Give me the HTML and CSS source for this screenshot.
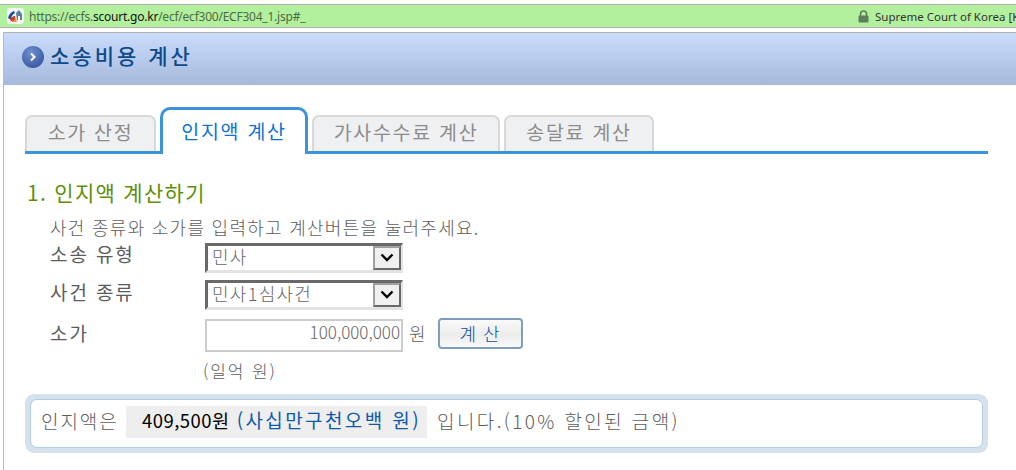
FILE: index.html
```html
<!DOCTYPE html>
<html lang="ko">
<head>
<meta charset="utf-8">
<title>소송비용 계산</title>
<link rel="stylesheet" href="styles.css">
</head>
<body>
<div class="urlbar">
  <svg class="favicon" width="17" height="16" viewBox="0 0 17 16"><rect x="0" y="0" width="17" height="16" rx="3" fill="#f4f4f4"/><path d="M1 10 C2 6 4 4 7 3 L8 5 C6 6 4 8 4 12Z" fill="#1b4f9c"/><path d="M3 12 C4 9 6 8 8 8 L9 14 L6 14Z" fill="#d9332a"/><path d="M5 14 L9 10 L10 14Z" fill="#e89a2c"/><path d="M9 5 L12 2 L15 6 L15 12 L10 12Z" fill="#5b7f9c"/><rect x="11" y="8" width="2" height="4" fill="#fff"/></svg>
  <span class="url"><span class="dim">https://ecfs.</span><span class="host">scourt.go.kr</span><span class="dim">/ecf/ecf300/ECF304_1.jsp#_</span></span>
  <span class="cert">
    <svg width="11" height="13" viewBox="0 0 11 13"><path d="M2.5 6V4a3 3 0 0 1 6 0v2" fill="none" stroke="#5f7f58" stroke-width="1.6"/><rect x="0.5" y="5.5" width="10" height="7" rx="1" fill="#5f7f58"/></svg>
    <span>Supreme Court of Korea [KR]</span>
  </span>
</div>
<div class="page">
  <h1 class="title"><span class="bullet"><svg width="8" height="10" viewBox="0 0 8 10"><path d="M2 1.5 L5.5 5 L2 8.5" fill="none" stroke="#fff" stroke-width="2"/></svg></span><span class="title-text">소송비용 계산</span></h1>
  <div class="content">
    <nav class="tabs">
      <a class="tab tab-1">소가 산정</a>
      <a class="tab tab-active">인지액 계산</a>
      <a class="tab tab-3">가사수수료 계산</a>
      <a class="tab tab-4">송달료 계산</a>
    </nav>
    <h2 class="section">1. 인지액 계산하기</h2>
    <p class="intro">사건 종류와 소가를 입력하고 계산버튼을 눌러주세요.</p>
    <div class="row row-1">
      <label class="label">소송 유형</label>
      <div class="select"><span class="value">민사</span><span class="arrow"><svg width="16" height="10" viewBox="0 0 16 10"><path d="M2.5 1.5 L8 7 L13.5 1.5" fill="none" stroke="#000" stroke-width="2.4"/></svg></span></div>
    </div>
    <div class="row row-2">
      <label class="label">사건 종류</label>
      <div class="select"><span class="value">민사1심사건</span><span class="arrow"><svg width="16" height="10" viewBox="0 0 16 10"><path d="M2.5 1.5 L8 7 L13.5 1.5" fill="none" stroke="#000" stroke-width="2.4"/></svg></span></div>
    </div>
    <div class="row row-3">
      <label class="label">소가</label>
      <div class="input">100,000,000</div>
      <span class="unit">원</span>
      <button class="calc" type="button">계 산</button>
    </div>
    <p class="amount">(일억 원)</p>
    <div class="result">
      <div class="result-inner">
        <span class="lead">인지액은</span>
        <span class="hl"><b class="sum">409,500원</b> <span class="words">(사십만구천오백 원)</span></span>
        <span class="tail">입니다.(10% 할인된 금액)</span>
      </div>
    </div>
  </div>
</div>
</body>
</html>
```
FILE: styles.css
```css
* { box-sizing: border-box; }
html, body { margin: 0; padding: 0; }
body {
  width: 1016px;
  height: 470px;
  overflow: hidden;
  background: #fff;
  font-family: "Noto Sans CJK KR", "Liberation Sans", sans-serif;
  font-weight: 300;
  color: #5c5c5c;
}
.urlbar {
  display: flex;
  align-items: center;
  height: 24px;
  margin-top: 4px;
  padding-left: 7px;
  background: #b3f09e;
  border-top: 1px solid #b0b0b0;
  border-bottom: 1px solid #b0b0b0;
  white-space: nowrap;
  overflow: hidden;
}
.favicon { flex: none; margin-right: 5px; }
.url { flex: none; width: 277px; font-family: "Noto Sans", sans-serif; font-weight: 400; font-size: 12px; letter-spacing: -0.23px; }
.dim { color: #4d6b45; }
.host { color: #111; }
.cert {
  flex: none;
  display: flex;
  align-items: center;
  gap: 6px;
  margin-left: 552px;
  font-family: "Noto Sans", sans-serif;
  font-weight: 400;
  font-size: 11.5px;
  color: #333;
}
.page {
  height: 438px;
  margin-top: 4px;
  margin-left: 3px;
  border-left: 1px solid #bbb;
  border-top: 1px solid #b0b0b0;
}
.title {
  display: flex;
  align-items: center;
  height: 52px;
  margin: 0;
  padding: 0 0 4px 18px;
  background: linear-gradient(#c9dcfb, #a6b9dc);
  color: #0f4a8c;
  font-size: 21px;
  font-weight: 500;
  letter-spacing: 3px;
}
.title-text { margin-bottom: 4px; }
.bullet {
  display: flex;
  align-items: center;
  justify-content: center;
  width: 22px;
  height: 22px;
  margin-right: 6px;
  border-radius: 50%;
  background: radial-gradient(circle at 40% 30%, #6f8fd0, #2d4a94);
}
.content { padding: 22px 0 0 21px; }
.tabs {
  display: flex;
  align-items: flex-end;
  gap: 4px;
  width: 963px;
  height: 47px;
  border-bottom: 3px solid #3b93dd;
}
.tab {
  display: flex;
  align-items: center;
  justify-content: center;
  height: 36px;
  padding-bottom: 5px;
  background: #eff0f2;
  border: 2px solid #d8d8d8;
  border-bottom: 0;
  border-radius: 7px 7px 0 0;
  color: #8c8c8c;
  font-size: 19.5px;
  font-weight: 400;
  letter-spacing: 1.7px;
  white-space: nowrap;
}
.tab-1 { width: 131px; }
.tab-3 { width: 188px; }
.tab-4 { width: 150px; }
.tab-active {
  width: 148px;
  height: 47px;
  margin-bottom: -3px;
  padding-bottom: 3px;
  background: #fff;
  border: 3px solid #3b93dd;
  border-bottom: 0;
  border-radius: 10px 10px 0 0;
  color: #0f74d1;
}
.section {
  margin: 25px 0 0 2px;
  color: #5e8f0a;
  font-size: 21px;
  font-weight: 400;
  line-height: 26px;
  letter-spacing: 1.3px;
}
.intro {
  margin: 10px 0 0 25px;
  font-size: 18px;
  line-height: 24px;
  letter-spacing: 1.27px;
  white-space: nowrap;
}
.row { display: flex; align-items: center; margin-left: 25px; }
.row-1 { margin-top: 4px; height: 30px; }
.row-2 { margin-top: 7px; height: 30px; }
.row-3 { margin-top: 9px; height: 33px; }
.label { width: 155px; font-size: 19px; font-weight: 400; letter-spacing: 1.9px; margin-bottom: 6px; }
.row-1 .label { margin-bottom: 10px; }
.row-2 .label { margin-bottom: 8px; }
.select {
  display: flex;
  justify-content: space-between;
  width: 198px;
  height: 30px;
  background: #fff;
  border-style: solid;
  border-width: 3px 2px 3px 3px;
  border-color: #696969 #e3e3e3 #e3e3e3 #696969;
}
.value { padding-left: 4px; font-size: 18px; line-height: 20px; letter-spacing: 1.3px; color: #666; }
.arrow {
  display: flex;
  align-items: center;
  justify-content: center;
  width: 28px;
  height: 24px;
  background: #f0f0f0;
  border-style: solid;
  border-width: 2px;
  border-color: #a0a0a0 #696969 #696969 #a0a0a0;
}
.input {
  width: 198px;
  height: 33px;
  padding: 0 1px 6px 0;
  border: 2px solid #ccc;
  background: #fff;
  font-size: 17px;
  line-height: 22px;
  text-align: right;
  color: #666;
}
.unit { margin-left: 6px; font-size: 18px; margin-bottom: 6px; }
.calc {
  width: 85px;
  height: 31px;
  margin-left: 12px;
  margin-bottom: 4px;
  padding: 0 0 4px;
  border: 2px solid #7f9dbd;
  border-radius: 4px;
  background: linear-gradient(#fafafa, #ececec 55%, #f8f8f8);
  color: #0f4f96;
  font-family: inherit;
  font-weight: 300;
  font-size: 18px;
  letter-spacing: 1px;
}
.amount {
  margin: 6px 0 0 178px;
  font-size: 17px;
  line-height: 26px;
  letter-spacing: 1.9px;
}
.result {
  width: 963px;
  height: 59px;
  margin-top: 10px;
  padding: 5px;
  background: #d5e1eb;
  border-radius: 9px;
}
.result-inner {
  display: flex;
  align-items: center;
  height: 49px;
  padding: 0 0 3px 10px;
  background: #fff;
  border: 1px solid #b0cde3;
  border-radius: 7px;
  font-size: 19px;
  letter-spacing: 1.9px;
  white-space: nowrap;
}
.lead { width: 85px; flex: none; padding-bottom: 3px; }
.tail { margin-left: 10px; letter-spacing: 2.4px; padding-bottom: 3px; }
.hl {
  display: block;
  flex: none;
  width: 301px;
  height: 32px;
  padding-left: 16px;
  background: #eeeeee;
  line-height: 27px;
}
.sum { font-size: 18.5px; font-weight: 400; color: #000; letter-spacing: 0.45px; }
.words { color: #0f5aa8; font-weight: 400; letter-spacing: 2.4px; }
```
